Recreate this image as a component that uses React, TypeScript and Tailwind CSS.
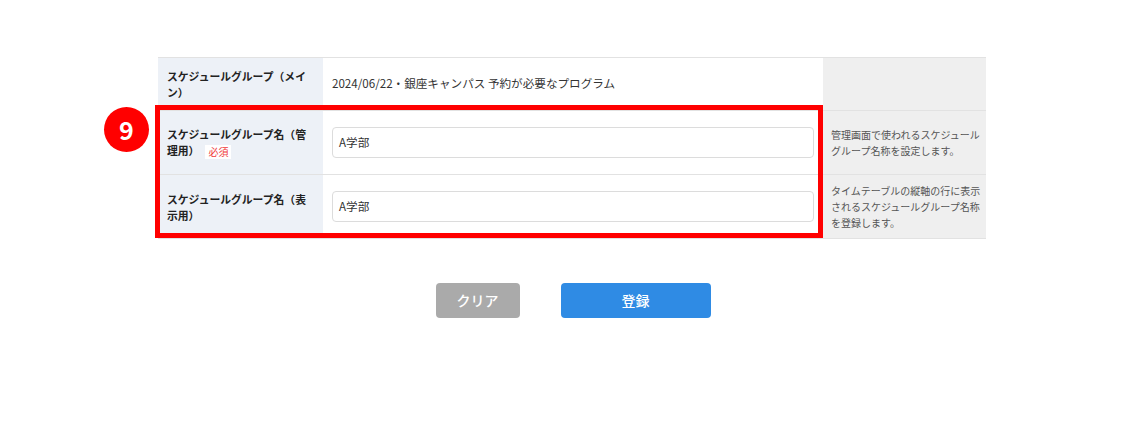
export default function App() {
  return (
    <main className="min-h-screen w-full bg-white font-['Noto_Sans_CJK_JP','Noto_Sans',sans-serif] text-[#333]">
      <div className="pl-[158px] pt-[57px]">
        <div className="relative w-[828px]">
          {/* Form table */}
          <div className="border-t border-b border-[#e2e2e2]">
            <Row label={<>スケジュールグループ（メイ<br />ン）</>} height="h-[52px]" help="">
              <span className="text-[11.6px]">2024/06/22・銀座キャンパス 予約が必要なプログラム</span>
            </Row>
            <Row
              label={
                <>
                  スケジュールグループ名（管
                  <br />
                  理用）
                  <span className="ml-[6px] inline-block bg-white px-[3px] align-middle text-[10px] font-normal leading-[14px] text-[#f03a3a]">必須</span>
                </>
              }
              height="h-[64px]"
              help={<>管理画面で使われるスケジュール<br />グループ名称を設定します。</>}
            >
              <Input value="A学部" />
            </Row>
            <Row
              label={<>スケジュールグループ名（表<br />示用）</>}
              height="h-[64px]"
              help={<>タイムテーブルの縦軸の行に表示<br />されるスケジュールグループ名称<br />を登録します。</>}
            >
              <Input value="A学部" />
            </Row>
          </div>

          {/* Annotation */}
          <div className="pointer-events-none absolute left-[-3px] top-[48px] h-[133px] w-[668px] border-[5px] border-[#ff0000]" />
          <div className="absolute left-[-54px] top-[50px] flex h-[45px] w-[45px] items-center justify-center rounded-full bg-[#ff0000] text-[25px] font-bold text-white">
            9
          </div>
        </div>

        <div className="flex w-[828px] justify-center gap-[41px] pl-[2px] pt-[44px]">
          <button className="h-[35px] w-[84px] rounded-[4px] bg-[#aaaaaa] text-[14px] font-medium text-white">クリア</button>
          <button className="h-[35px] w-[150px] rounded-[4px] bg-[#2f8be4] text-[14px] font-medium text-white">登録</button>
        </div>
      </div>
    </main>
  );
}

function Row({
  label,
  help,
  height,
  children,
}: {
  label: React.ReactNode;
  help: React.ReactNode;
  height: string;
  children: React.ReactNode;
}) {
  return (
    <div className={`grid grid-cols-[165px_500px_163px] border-t border-[#e2e2e2] first:border-t-0 ${height}`}>
      <div className="flex items-center bg-[#edf1f7] pl-[9px] text-[10.8px] font-bold leading-[16px] text-[#222]">
        <div>{label}</div>
      </div>
      <div className="flex items-center bg-white px-[9px]">{children}</div>
      <div className="flex items-center bg-[#efefef] pl-[8px] text-[10px] leading-[16px] text-[#555]">
        <div>{help}</div>
      </div>
    </div>
  );
}

function Input({ value }: { value: string }) {
  return (
    <div className="flex h-[31px] w-[483px] items-center rounded-[4px] border border-[#dcdcdc] bg-white px-[6px] text-[11.6px] text-[#333]">
      {value}
    </div>
  );
}
